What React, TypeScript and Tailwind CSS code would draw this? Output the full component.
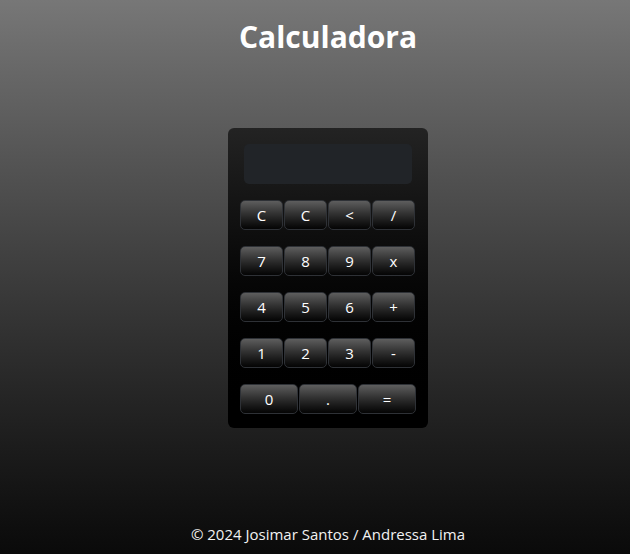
const rows: string[][] = [
  ["C", "C", "<", "/"],
  ["7", "8", "9", "x"],
  ["4", "5", "6", "+"],
  ["1", "2", "3", "-"],
];

function Key({ label, wide }: { label: string; wide?: boolean }) {
  return (
    <button
      className={`${wide ? "w-[58px]" : "w-[43px]"} h-[30px] rounded-[5px] border border-[#2e3136] bg-gradient-to-b from-[#5e5e5e] to-[#050505] text-white text-[15px] leading-none`}
    >
      {label}
    </button>
  );
}

export default function App() {
  return (
    <div
      className="min-h-[554px] pl-[26px] flex flex-col items-center bg-gradient-to-b from-[#777777] to-[#0a0a0a] text-white"
      style={{ fontFamily: '"Open Sans", "Noto Sans", sans-serif' }}
    >
      <h1 className="mt-[16px] text-[30px] font-bold leading-[42px]">Calculadora</h1>

      <div className="mt-[70px] w-[200px] h-[300px] rounded-[6px] bg-gradient-to-b from-[#232323] to-[#000000] flex flex-col items-center pt-[16px]">
        <div className="w-[168px] h-[40px] rounded-[5px] bg-[#212428]" />
        <div className="mt-[16px] flex flex-col gap-[16px]">
          {rows.map((r, i) => (
            <div key={i} className="flex gap-[1px]">
              {r.map((k, j) => (
                <Key key={j} label={k} />
              ))}
            </div>
          ))}
          <div className="flex gap-[1px]">
            <Key label="0" wide />
            <Key label="." wide />
            <Key label="=" wide />
          </div>
        </div>
      </div>

      <footer className="mt-auto mb-[10px] text-[15px] leading-[20px] text-[#f2f2f2]">
        © 2024 Josimar Santos / Andressa Lima
      </footer>
    </div>
  );
}
